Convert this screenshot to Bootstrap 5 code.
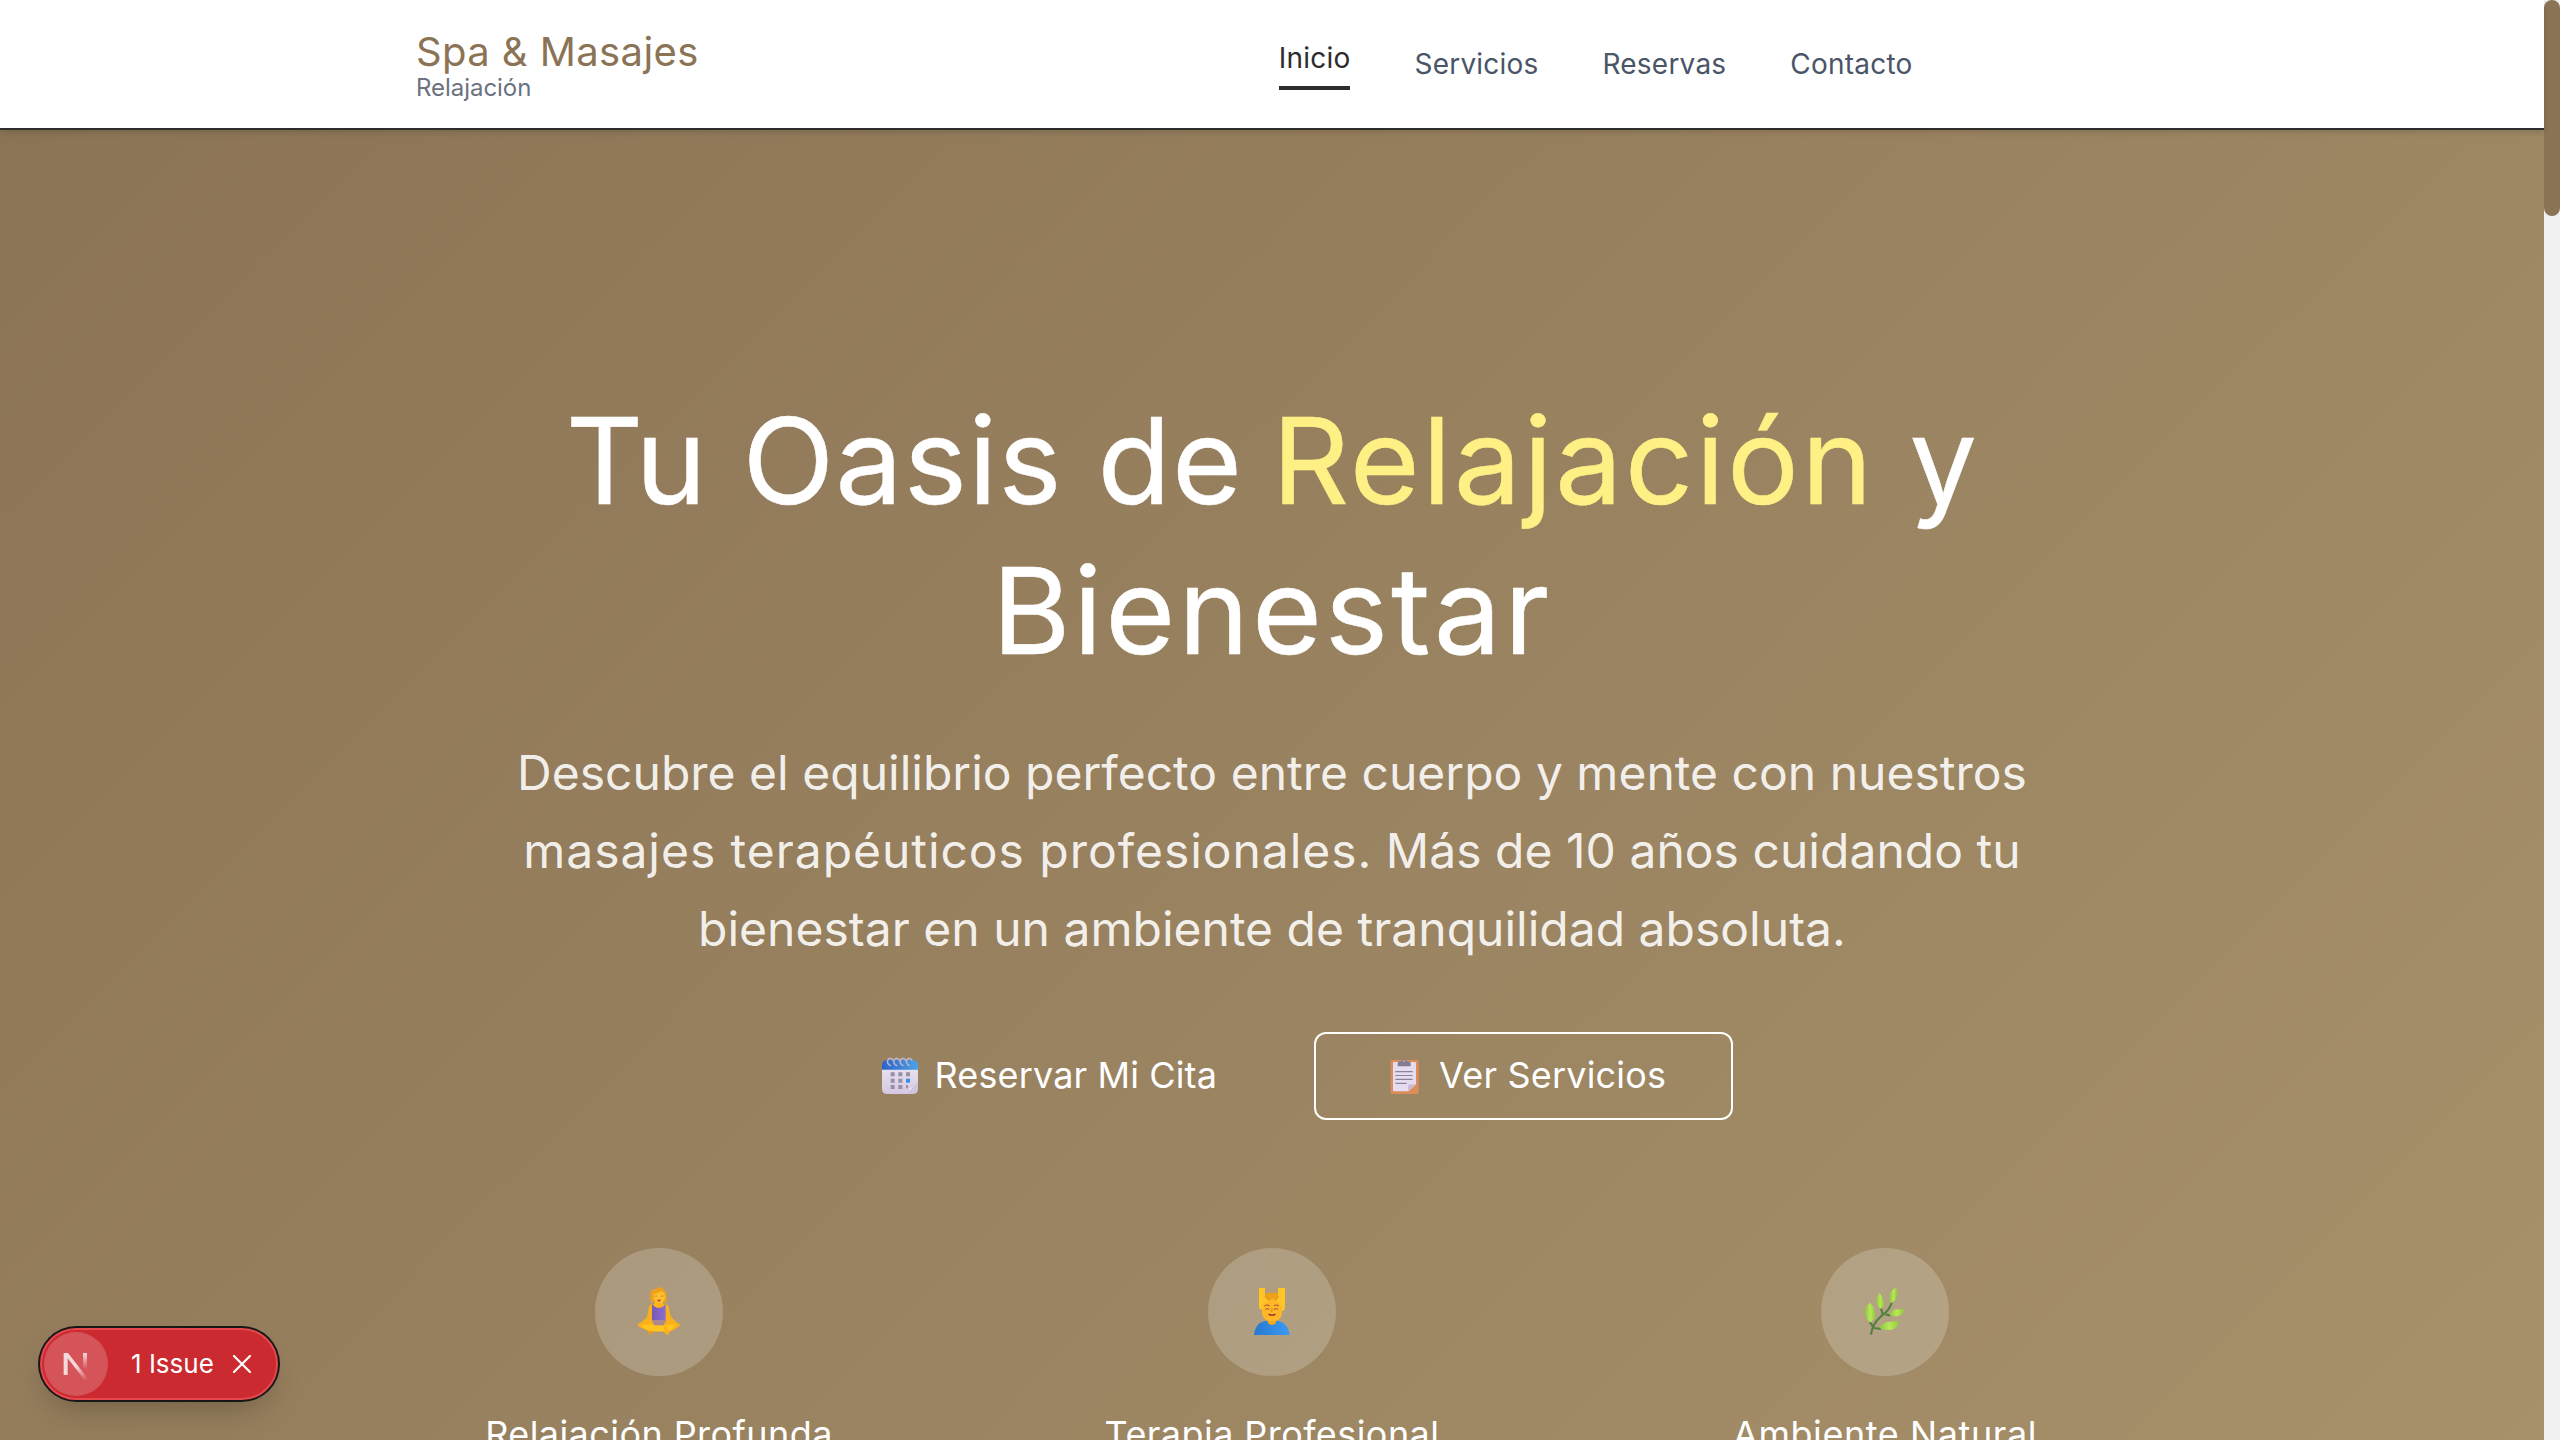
<!DOCTYPE html>
<html lang="es">
<head>
<meta charset="utf-8">
<meta name="viewport" content="width=device-width, initial-scale=1">
<title>Spa &amp; Masajes</title>
<link href="https://cdn.jsdelivr.net/npm/bootstrap@5.3.0/dist/css/bootstrap.min.css" rel="stylesheet">
<style>
body{font-family:Inter,"Noto Sans",sans-serif;height:1440px;color:#2d2d2d}
.page-col{width:2544px}
.site-head{height:130px;border-bottom:2px solid #2d2d2d;padding:0 416px;z-index:2;box-shadow:0 2px 6px rgba(0,0,0,.14)}
.brand-name{font-size:40px;line-height:48px;letter-spacing:.0101em;color:#8b7355}
.brand-sub{font-size:24px;line-height:24px;letter-spacing:-.002em;color:#6b7280}
.site-nav{gap:64px;padding-right:215.500px;font-size:28px;line-height:40px;letter-spacing:.0075em}
.site-nav a{color:#4a5568;text-decoration:none}
.site-nav a.current{color:#2d2d2d;padding-bottom:8px;border-bottom:4px solid #2d2d2d}
.hero{background:linear-gradient(135deg,#8b7355 0%,#a8926b 104%);padding-top:256px;height:1310px;color:#fff}
.hero-title{font-size:120px;line-height:150px;font-weight:400;margin:0 0 48px;letter-spacing:.009em;-webkit-text-stroke:.5px currentColor}
.hero-title em{font-style:normal;color:#fff085;letter-spacing:.02em;margin-left:-6px}
.hero-title .wide{letter-spacing:.024em}
.hero-text{font-size:48px;line-height:78px;margin:0 0 64px;color:rgba(255,255,255,.9);letter-spacing:.0002em}
.hero-text .wide{letter-spacing:.0198em}
.hero-text .mid{letter-spacing:.0006em}
.actions{gap:32px;margin-bottom:128px}
.cta{height:88px;font-size:36px;line-height:54px;color:#fff;border:2px solid transparent;border-radius:12px;text-decoration:none;letter-spacing:.004em}
.cta svg{width:40px;height:40px}
.cta span{padding-bottom:2px}
.cta-main{width:471px;padding-left:67px;gap:14.500px}
.cta-alt{width:419px;border-color:#fff;padding-left:72px;gap:11px;letter-spacing:.0053em}
.perks{width:1839px}
.perk-disc{width:128px;height:128px;border-radius:50%;background:rgba(255,255,255,.2);margin-bottom:31px}
.perk-disc svg{width:128px;height:128px;display:block}
.perk-name{font-size:36px;line-height:54px;letter-spacing:.012em;white-space:nowrap}
.perk-name.loose{letter-spacing:.016em}
.scroll-rail{width:16px;background:#f1f1f1}
.scroll-thumb{height:216px;border-radius:8px;background:#8b7355}
.issue-pill{left:40px;top:1328px;width:238px;height:72px;border-radius:36px;background:#ca2a30;border:2px solid #e5484d;box-shadow:0 0 0 2px #171717,0 16px 32px -8px rgba(0,0,0,.24);color:#fff;z-index:3;font-size:26px;line-height:36px;padding-left:2px}
.issue-disc{width:64px;height:64px;border-radius:50%;background:rgba(255,255,255,.2);margin-right:23px}
.issue-pill span{padding-bottom:1px}
.issue-x{width:18px;height:18px;margin-left:19px}
</style>
</head>
<body class="d-flex overflow-hidden">
<div class="page-col d-flex flex-column flex-shrink-0">
  <header class="site-head d-flex align-items-center justify-content-between bg-white position-relative">
    <div>
      <div class="brand-name">Spa &amp; Masajes</div>
      <div class="brand-sub">Relajación</div>
    </div>
    <nav class="site-nav d-flex align-items-center">
      <a href="#" class="current">Inicio</a><a href="#">Servicios</a><a href="#">Reservas</a><a href="#">Contacto</a>
    </nav>
  </header>
  <main class="hero text-center overflow-hidden d-flex flex-column align-items-center">
    <h1 class="hero-title">Tu Oasis de <em>Relajación</em> y<br><span class="wide">Bienestar</span></h1>
    <p class="hero-text">Descubre el equilibrio perfecto entre cuerpo y mente con nuestros<br><span class="wide">masajes terapéuticos profesionales.</span> <span class="mid">Más de 10 años cuidando tu</span><br>bienestar en un ambiente de tranquilidad absoluta.</p>
    <div class="actions d-flex">
      <a href="#" class="cta cta-main d-flex align-items-center">
        <svg viewBox="30 45 120 120">
          <defs><linearGradient id="calTop"><stop stop-color="#2f62c9"/><stop offset="1" stop-color="#4aa3e6"/></linearGradient>
          <linearGradient id="calBody" x2="0" y2="1"><stop stop-color="#e6e1ef"/><stop offset="1" stop-color="#d5c8e2"/></linearGradient></defs>
          <path d="M36 82H144V136L121 159H52Q36 159 36 143Z" fill="url(#calBody)"/>
          <path d="M36 86V74Q36 57 53 57H127Q144 57 144 74V86Z" fill="url(#calTop)"/>
          <path d="M105 159Q116 155 116 139Q135 137 144 123V143Q144 159 128 159Z" fill="#cfc4dc"/>
          <path d="M107 158Q118 153 118 141Q134 138 143 126Z" fill="#f0eaf6"/>
          <g fill="#9690a5"><path d="M62 94h12v12H62zM85 94h12v12H85zM108 94h12v12H108zM62 113h12v12H62zM85 113h12v12H85zM62 132h12v12H62zM85 132h12v12H85zM108 132h6v10h-6z"/></g>
          <path d="M108 113h12v12h-12z" fill="#378ee6"/>
          <g fill="none" stroke="#bdb4c8" stroke-width="4.5" stroke-linecap="round"><path id="ring" d="M61 74Q50 68 53 58Q57 50 65 53L69 58"/><use href="#ring" x="19"/><use href="#ring" x="38"/><use href="#ring" x="57"/></g>
        </svg>
        <span>Reservar Mi Cita</span>
      </a>
      <a href="#" class="cta cta-alt d-flex align-items-center">
        <svg viewBox="40 45 120 120">
          <rect x="48" y="57" width="84" height="102" rx="5" fill="#db8e58"/>
          <path d="M59 63H121Q124 63 124 66V130L102 151H59Q55 151 55 147V67Q55 63 59 63Z" fill="#e6dcef"/>
          <path d="M100 151V135Q100 130 105 130H124Z" fill="#cbbbd8"/>
          <path d="M69 76V67Q69 61 77 61H81Q82 53 88 53T95 61H100Q108 61 108 67V76Z" fill="#857c90"/><circle cx="88" cy="60" r="3" fill="#b8aec3"/>
          <g stroke="#8d8499" stroke-width="3.4"><path d="M62 92H114M62 103.500H114M62 115H114M62 127H96"/></g>
        </svg>
        <span>Ver Servicios</span>
      </a>
    </div>
    <div class="perks d-flex">
      <div class="col d-flex flex-column align-items-center">
        <div class="perk-disc"><svg viewBox="45 54 384 384">
          <defs><linearGradient id="top1"><stop stop-color="#7a58b5"/><stop offset="1" stop-color="#8a6fd0"/></linearGradient></defs>
          <path d="M213 213C207 186 214 177 228 177C238 167 249 174 253 181C264 190 258 204 261 217H213Z" fill="#f2a01c"/>
          <path d="M216 222Q206 224 205 243L201 261Q188 277 173 281Q172 286 179 292L205 303Q205 314 213 314L219 305H251Q258 315 265 314L269 305Q288 299 300 286Q300 281 289 277L272 259L267 238Q266 224 257 221Z" fill="#f9b11b"/>
          <path d="M216 221Q226 237 248 231L257 221V270H216Z" fill="url(#top1)"/>
          <path d="M215 270H259L251 286H223Z" fill="#ad8791"/>
          <path d="M223 216H249V227Q236 239 223 227Z" fill="#ffb419"/>
          <path d="M221 193Q236 190 243 183Q254 187 255 199Q255 219 237 220Q219 217 221 193Z" fill="#ffc22e"/>
          <path d="M224 199q5-3 8 0M242 199q5-3 8 0" fill="none" stroke="#a75b1a" stroke-width="2"/>
          <path d="M232 208Q237 211 243 208Q242 215 237 215T232 208Z" fill="#c02e4c"/>
          <path d="M184 284Q203 285 213 282Q231 291 252 286L285 283Q286 294 267 302Q247 304 213 303Q191 299 184 284Z" fill="#ffc41d"/>
          <path d="M249 291Q263 287 264 296L260 308Q255 303 249 291Z" fill="#ffb01c"/>
          <path d="M205 303H219L211 314ZM173 281q6 3 11 0" fill="#eb921f"/>
        </svg></div>
        <div class="perk-name">Relajación Profunda</div>
      </div>
      <div class="col d-flex flex-column align-items-center">
        <div class="perk-disc"><svg viewBox="54 54 384 384">
          <defs><linearGradient id="shirt"><stop stop-color="#2678cd"/><stop offset="1" stop-color="#3c9af5"/></linearGradient></defs>
          <path d="M192 315Q197 272 235 272H257Q294 274 299 315Z" fill="url(#shirt)"/>
          <path d="M233 266H258V279Q246 291 233 279Z" fill="#f2a51d"/>
          <path d="M220 210Q224 190 234 188H259Q269 193 270 210Z" fill="#eda115"/>
          <path d="M217 224Q224 206 246 206T273 224L276 251Q272 274 246 274T216 251Z" fill="#ffb727"/>
          <path d="M207 174H225V198Q229 208 239 211L231 217Q218 215 219 239Q206 240 207 226ZM264 174H285V230Q285 244 275 243Q273 223 264 217L254 212Q263 207 264 198Z" fill="#ffc526"/>
          <path d="M225 198Q230 208 240 211M265 198Q263 207 253 212" fill="none" stroke="#db8b16" stroke-width="3"/>
          <path d="M223 228q7-6 16-1M252 227q8-5 15 1M226 238q6-4 12 0M251 238q7-4 13 0" fill="none" stroke="#9f4c3c" stroke-width="3"/>
          <path d="M237 253Q246 258 255 253" fill="none" stroke="#922b31" stroke-width="4" stroke-linecap="round"/><path d="M245 235V246" stroke="#e69722" stroke-width="5"/>
        </svg></div>
        <div class="perk-name">Terapia Profesional</div>
      </div>
      <div class="col d-flex flex-column align-items-center">
        <div class="perk-disc"><svg viewBox="63 54 384 384">
          <defs><linearGradient id="leaf"><stop stop-color="#8ac83e"/><stop offset=".5" stop-color="#b9e75a"/><stop offset="1" stop-color="#91cb38"/></linearGradient></defs>
          <path d="M213 314Q216 282 244 258Q271 241 276 212M248 253L243 235M257 254L271 256M219 290L210 277M221 294L243 297" fill="none" stroke="#53803f" stroke-width="6.500"/>
          <g fill="url(#leaf)"><path d="M210 218Q223 230 226 255Q225 267 214 277Q196 272 195 243Q197 228 210 218Z"/>
          <path d="M239 188Q250 203 252 220Q252 231 244 236Q229 231 229 211Q230 198 239 188Z"/>
          <path d="M288 171Q292 186 291 200Q285 216 271 220Q267 207 271 190Q278 177 288 171Z"/>
          <path d="M268 253Q277 237 295 238L313 238Q310 256 292 259Q277 260 268 253Z"/>
          <path d="M239 295Q247 275 270 275L298 273Q293 295 276 299Q256 302 239 295Z"/></g>
        </svg></div>
        <div class="perk-name loose">Ambiente Natural</div>
      </div>
    </div>
  </main>
</div>
<div class="scroll-rail flex-shrink-0"><div class="scroll-thumb"></div></div>
<div class="issue-pill position-absolute d-flex align-items-center">
  <div class="issue-disc flex-shrink-0"><svg class="d-block" width="64" height="64" viewBox="132 126 192 192">
    <defs><linearGradient id="nDiag" gradientUnits="userSpaceOnUse" x1="228" y1="230" x2="258" y2="272"><stop stop-color="#fff" stop-opacity=".78"/><stop offset="1" stop-color="#fff" stop-opacity="0"/></linearGradient>
    <linearGradient id="nStem" gradientUnits="userSpaceOnUse" x1="0" y1="189" x2="0" y2="238"><stop stop-color="#fff" stop-opacity=".78"/><stop offset="1" stop-color="#fff" stop-opacity="0"/></linearGradient></defs>
    <path d="M191 255V189H204L264 266L256 273L203 205V255Z" fill="url(#nDiag)"/><path d="M249 189H261V238H249Z" fill="url(#nStem)"/></svg></div>
  <span class="text-nowrap">1 Issue</span>
  <svg class="issue-x flex-shrink-0" viewBox="0 0 18 18"><path d="M1 1L17 17M17 1L1 17" stroke="#fff" stroke-width="2.200" stroke-linecap="round"/></svg>
</div>
<script src="https://cdn.jsdelivr.net/npm/bootstrap@5.3.0/dist/js/bootstrap.bundle.min.js"></script>
</body>
</html>
